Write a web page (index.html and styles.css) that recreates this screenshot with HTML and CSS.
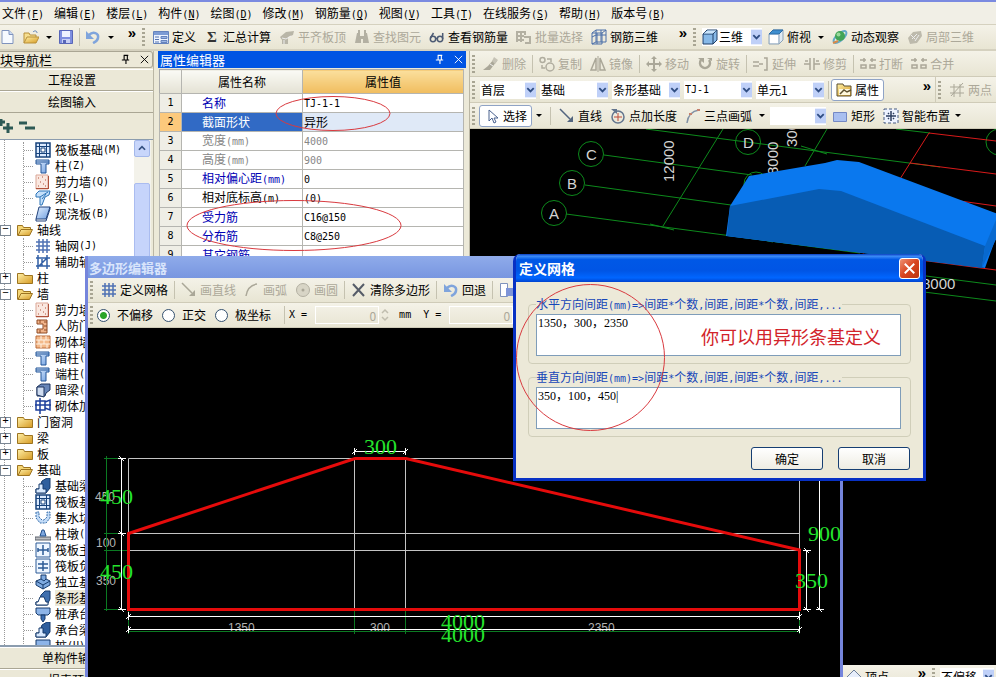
FILE: index.html
```html
<!DOCTYPE html>
<html lang="zh-CN">
<head>
<meta charset="utf-8">
<title>钢筋算量</title>
<link rel="stylesheet" href="styles.css">
</head>
<body>
<svg class="defs" aria-hidden="true">
  <defs>
    <linearGradient id="gold" x1="0" y1="0" x2="1" y2="1"><stop offset="0" stop-color="#fff0a8"/><stop offset="1" stop-color="#d69a22"/></linearGradient>
    <linearGradient id="steel" x1="0" y1="0" x2="1" y2="1"><stop offset="0" stop-color="#e4f0ff"/><stop offset="1" stop-color="#6f9fe0"/></linearGradient>
  </defs>
  <symbol id="new" viewBox="0 0 16 16"><path d="M2 1.500h7l4 4v9H2z" fill="#f6faff" stroke="#7f93bd"/><path d="M9 1.500v4h4" fill="#c9d8f2" stroke="#7f93bd"/></symbol>
  <symbol id="open" viewBox="0 0 16 16"><path d="M1 14V4h5l1 2h6v3" fill="#f6df90" stroke="#b8903a"/><path d="M1 14l3-6h12l-3 6z" fill="url(#gold)" stroke="#b8903a"/><path d="M10 3c2-2 4-1 4 1" fill="none" stroke="#5c7fb5"/></symbol>
  <symbol id="save" viewBox="0 0 16 16"><path d="M1.500 1.500h13v13h-13z" fill="#7f8fe0" stroke="#5866b8"/><path d="M4 2h8v6H4z" fill="#eef2ff"/><path d="M4 10h8v4H4z" fill="#c7cff5"/><path d="M5 11h3v3H5z" fill="#5866b8"/></symbol>
  <symbol id="undo" viewBox="0 0 16 16"><path d="M4 6c4-4 10-2 9 3-.5 3-3 4-5 5" fill="none" stroke="#7fa4dc" stroke-width="2.500"/><path d="M1 2v8h8z" fill="#7fa4dc"/></symbol>
  <symbol id="define" viewBox="0 0 16 16"><path d="M.5 2.500h15v12H.5z" fill="#eef4ff" stroke="#6583bd"/><path d="M1 3h14v3H1z" fill="#7d9cd4"/><path d="M2 8h4M2 10.500h4M2 13h4" stroke="#5574b0"/><path d="M8 7.500h6v2H8zM8 11.500h6v2H8z" fill="#9db6e4" stroke="#6583bd"/></symbol>
  <symbol id="flat" viewBox="0 0 16 16"><path d="M1 8l6-5 8-1-1 4-5 2v7H3v-4z" fill="#b9b6a8"/><path d="M3 9l4 1 5-3M5 15v-4" stroke="#eee" fill="none"/></symbol>
  <symbol id="find" viewBox="0 0 16 16"><path d="M3 4h3v3h4V4h3l2 10H9v-4H7v4H1z" fill="#b3b0a2"/><path d="M4 1h2v3H4zM10 1h2v3h-2z" fill="#b3b0a2"/></symbol>
  <symbol id="glasses" viewBox="0 0 16 16"><g fill="none" stroke="#4c5b74" stroke-width="1.500"><circle cx="4" cy="10" r="2.700"/><circle cx="11" cy="10" r="2.700"/><path d="M1.500 9l3-5M13.700 10V4M7 9.500h2"/></g></symbol>
  <symbol id="batch" viewBox="0 0 16 16"><path d="M1 2v11M5 2v11M1 3h8M1 7h7M1 11h7M9 2v4M8 8h6v6H9" fill="none" stroke="#b3b0a2" stroke-width="2"/></symbol>
  <symbol id="rebar3d" viewBox="0 0 16 16"><path d="M1 4l4-3v12l-4 2zM5 1h10v12H5M10 1v12M1 8l4-2h10M1 4h10l4-3M11 4v11H1M6 4v11" fill="none" stroke="#4a6ea8"/></symbol>
  <symbol id="cube" viewBox="0 0 16 16"><path d="M1 5l4-4h10v10l-4 4H1z" fill="#87b9e8" stroke="#1f3f66"/><path d="M1 5h10v10M11 5l4-4" fill="none" stroke="#1f3f66"/><path d="M1.500 4.500l4-3h9l-4 3z" fill="#c9e3fa"/></symbol>
  <symbol id="topcube" viewBox="0 0 16 16"><path d="M1 5l4-4h10v10l-4 4H1z" fill="#dfe9f3" stroke="#8ba2b8"/><path d="M1 5l4-4h10l-4 4z" fill="#3f8fd0" stroke="#2f6da5"/><path d="M11 5v10" stroke="#8ba2b8"/><path d="M2 6h8v8H2z" fill="#fff"/></symbol>
  <symbol id="orbit" viewBox="0 0 16 16"><ellipse cx="8" cy="8" rx="8" ry="3.500" fill="none" stroke="#63a9c8" stroke-width="2" transform="rotate(-42 8 8)"/><circle cx="8" cy="7" r="5" fill="#43a457"/><circle cx="6.500" cy="5.500" r="2" fill="#98d89a"/><path d="M1 14l5-2" stroke="#d68a4a" stroke-width="2"/></symbol>
  <symbol id="local3d" viewBox="0 0 16 16"><path d="M1 9l5-6 8-1 1 5-5 7-7 1z" fill="#bdbaac"/><path d="M5 10l5-5M8 12l4-6M4 6l4 4" stroke="#eee"/></symbol>
  <symbol id="brush" viewBox="0 0 16 16"><path d="M0 14h7l7-9-3-2-6 7" fill="#aaa798"/><path d="M11 1l4 3-3 4-3-3z" fill="#c6c3b6"/><path d="M7 8l3 2" stroke="#eee"/></symbol>
  <symbol id="copy" viewBox="0 0 16 16"><g fill="none" stroke="#b0ad9f" stroke-width="1.500"><circle cx="3.500" cy="4" r="2.500"/><circle cx="11" cy="11" r="4"/><path d="M8 3h4v3M3 9v3h3"/></g></symbol>
  <symbol id="mirror" viewBox="0 0 16 16"><path d="M6 2v12H1zM10 2v12h5z" fill="none" stroke="#aaa798" stroke-width="1.500"/><path d="M8 0v16" stroke="#aaa798"/></symbol>
  <symbol id="move" viewBox="0 0 16 16"><path d="M8 2v12M2 8h12" stroke="#aaa798" stroke-width="2"/><path d="M8 0l3 3H5zM8 16l3-3H5zM0 8l3-3v6zM16 8l-3-3v6z" fill="#aaa798"/></symbol>
  <symbol id="rotate" viewBox="0 0 16 16"><path d="M4 4a5 5 0 1 0 8 0" fill="none" stroke="#aaa798" stroke-width="2.500"/><path d="M1 2h6v5zM10 2h5v3z" fill="#aaa798"/></symbol>
  <symbol id="extend" viewBox="0 0 16 16"><path d="M0 6h6M0 10h6M6 8h4M11 2h3v12h-3" fill="none" stroke="#aaa798" stroke-width="1.500"/></symbol>
  <symbol id="trim" viewBox="0 0 16 16"><path d="M0 8h6M10 8h6M6 2v12M10 2v12M1 5h3M12 5h3" fill="none" stroke="#aaa798" stroke-width="1.500"/></symbol>
  <symbol id="break" viewBox="0 0 16 16"><path d="M0 4h6M10 4h6M1 12h5v-3H1zM10 12h5v-3h-5zM4 2v4M12 2v4" fill="none" stroke="#aaa798" stroke-width="1.500"/></symbol>
  <symbol id="prop" viewBox="0 0 16 16"><path d="M1 2h6l1 2h7v10H1z" fill="url(#gold)" stroke="#5d5030"/><path d="M3 7h11v6H3z" fill="#fff8dc"/><path d="M4 12l4-4 3 2 4-2" fill="none" stroke="#5d5030" stroke-width="1.500"/></symbol>
  <symbol id="twopt" viewBox="0 0 16 16"><path d="M1 5h14M1 11h14M5 2v13M11 2v13M2 14L14 1" stroke="#aaa798"/></symbol>
  <symbol id="pointer" viewBox="0 0 16 16"><path d="M5 2v11l3-3 2 5 2-1-2-4h4z" fill="#fff" stroke="#4b628f"/></symbol>
  <symbol id="line" viewBox="0 0 16 16"><path d="M1 1l10 10" stroke="#53657f" stroke-width="1.500"/><path d="M14 8v6H8z" fill="#53657f"/></symbol>
  <symbol id="lineoff" viewBox="0 0 16 16"><path d="M1 1l10 10" stroke="#aaa798" stroke-width="1.500"/><path d="M14 8v6H8z" fill="#aaa798"/></symbol>
  <symbol id="ptlen" viewBox="0 0 16 16"><circle cx="8" cy="9" r="6" fill="none" stroke="#63758e" stroke-width="1.500"/><path d="M8 5v8M4 9h8" stroke="#c04a38"/><path d="M1 1h6v5z" fill="#63758e"/></symbol>
  <symbol id="arc" viewBox="0 0 16 16"><path d="M2 15C3 7 7 3 14 2" fill="none" stroke="#8090a4" stroke-width="1.500"/><path d="M12 1h3v2h-3zM4 5h3v2H4z" fill="#c5806e"/></symbol>
  <symbol id="arcoff" viewBox="0 0 16 16"><path d="M2 14C3 7 7 3 13 2" fill="none" stroke="#aaa798" stroke-width="1.500"/></symbol>
  <symbol id="circoff" viewBox="0 0 16 16"><circle cx="8" cy="8" r="6.500" fill="#d8d5c6" stroke="#b3b0a2"/><circle cx="8" cy="8" r="1.500" fill="#aaa798"/></symbol>
  <symbol id="rect" viewBox="0 0 16 16"><path d="M1.500 4.500h13v9h-13z" fill="#a9bff0" stroke="#7488c4"/></symbol>
  <symbol id="smart" viewBox="0 0 16 16"><path d="M1 1h14v14H1z" fill="#eef3ff" stroke="#465a80" stroke-dasharray="3 2"/><path d="M8 3v10M3 8h10M5 5l1 1M11 5l-1 1M5 11l1-1M11 11l-1-1" stroke="#2d3e60" stroke-width="1.500"/></symbol>
  <symbol id="cross" viewBox="0 0 16 16"><path d="M2 2l11 12M13 2L2 14" stroke="#555c68" stroke-width="2"/></symbol>
  <symbol id="vertex" viewBox="0 0 16 16"><path d="M8 1l7 7-7 7-7-7z" fill="#e7eefb" stroke="#6d7f99"/></symbol>
  <symbol id="pages" viewBox="0 0 16 16"><path d="M1.500 1.500h7v13h-7z" fill="#fff" stroke="#7f93bd"/><path d="M7 6h8v8H7z" fill="#7d94d8"/></symbol>
  <symbol id="raft" viewBox="0 0 16 16"><path d="M1 1h14v14H1z" fill="#dcebff" stroke="#17437c" stroke-width="1.500"/><path d="M4.500 1v14M11.500 1v14M1 4.500h14M1 11.500h14" stroke="#17437c"/><path d="M6 6h4v4H6z" fill="#fff" stroke="#17437c"/></symbol>
  <symbol id="column" viewBox="0 0 16 16"><path d="M1 2h13v4h-3v9H6V6H1z" fill="url(#steel)" stroke="#225497"/><path d="M1 4h13" stroke="#225497"/></symbol>
  <symbol id="wall" viewBox="0 0 16 16"><path d="M1 1h12v14H1z" fill="#fae8e0" stroke="#dba797"/><path d="M13.500 2v13M1 14.500h13M3 4h1M7 3h1M10 6h1M5 8h1M8 10h1M3 12h1M10 12h1" stroke="#b0523b"/></symbol>
  <symbol id="beam" viewBox="0 0 16 16"><path d="M1 4l3-3h11l-1 4-4 2-3 8H5V7H1z" fill="#c5e0fa" stroke="#2d74b8"/><path d="M5 7l8-5M7 9l4-5" stroke="#2d74b8"/></symbol>
  <symbol id="slab" viewBox="0 0 16 16"><path d="M4 1h11l-4 12H1z" fill="url(#steel)" stroke="#23437c"/><path d="M1 13v2h10l4-12V1" fill="none" stroke="#23437c"/></symbol>
  <symbol id="grid" viewBox="0 0 16 16"><path d="M4 1v14M8 1v14M12 1v14M1 4h14M1 8h14M1 12h14" stroke="#4f72b4" stroke-width="1.500"/></symbol>
  <symbol id="aux" viewBox="0 0 16 16"><path d="M3 1v14M12 1v14M1 4h14M1 12h14M4 12l8-8M7 5v7" stroke="#315fa5" fill="none" stroke-width="1.500"/></symbol>
  <symbol id="door" viewBox="0 0 16 16"><path d="M2 2h10v13H2v-4h6V6H2z" fill="#f1b48a" stroke="#8e4a24"/><path d="M5 2v3M9 4h3M9 8h3M9 12h3M5 12v3" stroke="#8e4a24"/></symbol>
  <symbol id="brick" viewBox="0 0 16 16"><path d="M1 2h14v12H1z" fill="#f3b98a" stroke="#bb6a38"/><path d="M1 6h14M1 10h14M6 2v4M11 2v4M4 6v4M9 6v4M6 10v4M12 10v4" stroke="#fff1e2"/></symbol>
  <symbol id="hbeam" viewBox="0 0 16 16"><path d="M2 5l4-3h9v6l-4 3-1 3H2z" fill="#6886b8" stroke="#1e355f"/><path d="M2 5h7v10l-7-2z" fill="#cfdcf0" stroke="#1e355f"/></symbol>
  <symbol id="reinf" viewBox="0 0 16 16"><path d="M1 3h9v9H1zM5 0v16M0 7h16M10 4l5-2v10l-5-2" fill="none" stroke="#1d3f9c" stroke-width="1.500"/></symbol>
  <symbol id="fold" viewBox="0 0 16 16"><path d="M.5 13.500v-10h6l1 2h8v8z" fill="url(#gold)" stroke="#9d7420"/></symbol>
  <symbol id="foldo" viewBox="0 0 16 16"><path d="M.5 13.500v-10h5l1 2h7v3" fill="#f5d676" stroke="#9d7420"/><path d="M1 13.500l3-6h11.500l-3 6z" fill="url(#gold)" stroke="#9d7420"/></symbol>
  <symbol id="fbeam" viewBox="0 0 16 16"><path d="M1 15v-4h3l3-8 5-3h3v10l-4 5z" fill="#2f5f9e" stroke="#163b6c"/><path d="M1 15v-4h3V6h4v5h3v4z" fill="#d9eaff" stroke="#163b6c"/></symbol>
  <symbol id="sump" viewBox="0 0 16 16"><path d="M1 2v6l4 5h6l4-5V2h-3v5l-3 3H7L4 7V2z" fill="#c3dcf8" stroke="#326aa8" stroke-dasharray="2 1"/></symbol>
  <symbol id="pier" viewBox="0 0 16 16"><path d="M0 11h16v3H0z" fill="#bdbfc2" stroke="#5a616b"/><path d="M5 10l2-6h2l2 6z" fill="#7da7df" stroke="#23508c"/></symbol>
  <symbol id="rmain" viewBox="0 0 16 16"><path d="M1 1h14v14H1z" fill="#eef6ff" stroke="#2d5b96"/><path d="M3 8h10M8 3v10M3 6v4M13 6v4" stroke="#2d5b96" stroke-width="1.500"/></symbol>
  <symbol id="rneg" viewBox="0 0 16 16"><path d="M1 1h14v14H1z" fill="#eef6ff" stroke="#2d5b96"/><path d="M3 6h10M3 10h10M8 3v10" stroke="#2d5b96" stroke-width="1.500"/></symbol>
  <symbol id="isol" viewBox="0 0 16 16"><path d="M1 7l5-2V1h5v4l4 2v4l-7 4-7-4z" fill="#7eaae0" stroke="#163b6c"/><path d="M1 7l7 4 7-4M8 11v4M6 5l3 2 2-2" fill="none" stroke="#163b6c"/></symbol>
  <symbol id="strip" viewBox="0 0 16 16"><path d="M1 15v-3h3l2-7 4-4h5v8l-3 6z" fill="#3f6fae" stroke="#163b6c"/><path d="M1 15v-3h2l2-5h4l2 5h2v3z" fill="#fff" stroke="#163b6c"/></symbol>
  <symbol id="cap" viewBox="0 0 16 16"><path d="M1 2h14v5l-2 2H3L1 7z" fill="#8db4e8" stroke="#163b6c"/><path d="M6 9h4v4l-2 3-2-3z" fill="#3d6fb4" stroke="#163b6c"/></symbol>
  <symbol id="pin" viewBox="0 0 12 12"><path d="M4 1.500h5M4.500 1v5M8 1v5M2 6.500h8M6.500 7v4" stroke="currentColor" fill="none" stroke-width="1.200"/></symbol>
  <symbol id="x" viewBox="0 0 12 12"><path d="M2 2l8 8M10 2l-8 8" stroke="currentColor" fill="none"/></symbol>
  <symbol id="chev" viewBox="0 0 12 16"><path d="M0 0h12v16H0z" fill="#bfd0f8"/><path d="M2.500 6L6 9.500 9.500 6" fill="none" stroke="#2f4d82" stroke-width="2"/></symbol>
</svg>

<div class="app">
  <nav class="menubar">
    <button>文件<span class="m">(<u>F</u>)</span></button><button>编辑<span class="m">(<u>E</u>)</span></button><button>楼层<span class="m">(<u>L</u>)</span></button><button>构件<span class="m">(<u>N</u>)</span></button><button>绘图<span class="m">(<u>D</u>)</span></button><button>修改<span class="m">(<u>M</u>)</span></button><button>钢筋量<span class="m">(<u>Q</u>)</span></button><button>视图<span class="m">(<u>V</u>)</span></button><button>工具<span class="m">(<u>T</u>)</span></button><button>在线服务<span class="m">(<u>S</u>)</span></button><button>帮助<span class="m">(<u>H</u>)</span></button><button>版本号<span class="m">(<u>B</u>)</span></button>
  </nav>

  <div class="toolbar main">
    <div class="group files">
      <button class="tool" aria-label="新建"><svg class="ic"><use href="#new"/></svg></button>
      <button class="tool" aria-label="打开"><svg class="ic"><use href="#open"/></svg><i class="caret"></i></button>
      <button class="tool" aria-label="保存"><svg class="ic"><use href="#save"/></svg></button>
      <i class="sep"></i>
      <button class="tool" aria-label="撤销"><svg class="ic"><use href="#undo"/></svg><i class="caret"></i></button>
      <b class="more">»</b>
    </div>
    <div class="group actions">
      <i class="grip"></i>
      <button class="tool"><svg class="ic"><use href="#define"/></svg>定义</button>
      <button class="tool"><span class="ic sigma">Σ</span>汇总计算</button>
      <button class="tool" disabled><svg class="ic"><use href="#flat"/></svg>平齐板顶</button>
      <button class="tool" disabled><svg class="ic"><use href="#find"/></svg>查找图元</button>
      <button class="tool"><svg class="ic"><use href="#glasses"/></svg>查看钢筋量</button>
      <button class="tool" disabled><svg class="ic"><use href="#batch"/></svg>批量选择</button>
      <button class="tool"><svg class="ic"><use href="#rebar3d"/></svg>钢筋三维</button>
      <b class="more end">»</b>
    </div>
    <div class="group">
      <i class="grip"></i>
      <label class="combo view"><svg class="ic"><use href="#cube"/></svg><select aria-label="视图"><option>三维</option></select><svg class="chev"><use href="#chev"/></svg></label>
      <button class="tool"><svg class="ic"><use href="#topcube"/></svg>俯视<i class="caret"></i></button>
      <button class="tool"><svg class="ic"><use href="#orbit"/></svg>动态观察</button>
      <button class="tool" disabled><svg class="ic"><use href="#local3d"/></svg>局部三维</button>
    </div>
  </div>

  <div class="work">
    <aside class="nav">
      <header class="navhead"><span>块导航栏</span><svg class="s12"><use href="#pin"/></svg><svg class="s12"><use href="#x"/></svg></header>
      <button class="navbtn">工程设置</button>
      <button class="navbtn">绘图输入</button>
      <div class="treetools"><svg width="40" height="18" viewBox="0 0 40 18"><path d="M1 1v7M0 4h5M8 5v10M3 10h10" stroke="#2d5a55" stroke-width="3"/><path d="M19 5h8M25 10h10" stroke="#2d5a55" stroke-width="3"/></svg></div>
      <div class="treebox">
        <ul class="tree">
          <li class="leaf"><svg class="ic"><use href="#raft"/></svg>筏板基础<span class="m">(M)</span></li>
          <li class="leaf"><svg class="ic"><use href="#column"/></svg>柱<span class="m">(Z)</span></li>
          <li class="leaf"><svg class="ic"><use href="#wall"/></svg>剪力墙<span class="m">(Q)</span></li>
          <li class="leaf"><svg class="ic"><use href="#beam"/></svg>梁<span class="m">(L)</span></li>
          <li class="leaf"><svg class="ic"><use href="#slab"/></svg>现浇板<span class="m">(B)</span></li>
          <li class="node minus"><svg class="ic"><use href="#foldo"/></svg>轴线</li>
          <li class="leaf"><svg class="ic"><use href="#grid"/></svg>轴网<span class="m">(J)</span></li>
          <li class="leaf"><svg class="ic"><use href="#aux"/></svg>辅助轴</li>
          <li class="node plus"><svg class="ic"><use href="#fold"/></svg>柱</li>
          <li class="node minus"><svg class="ic"><use href="#foldo"/></svg>墙</li>
          <li class="leaf"><svg class="ic"><use href="#wall"/></svg>剪力墙</li>
          <li class="leaf"><svg class="ic"><use href="#door"/></svg>人防门</li>
          <li class="leaf"><svg class="ic"><use href="#brick"/></svg>砌体墙</li>
          <li class="leaf"><svg class="ic"><use href="#column"/></svg>暗柱<span class="m">(Z)</span></li>
          <li class="leaf"><svg class="ic"><use href="#column"/></svg>端柱<span class="m">(Z)</span></li>
          <li class="leaf"><svg class="ic"><use href="#hbeam"/></svg>暗梁<span class="m">(A)</span></li>
          <li class="leaf"><svg class="ic"><use href="#reinf"/></svg>砌体加</li>
          <li class="node plus"><svg class="ic"><use href="#fold"/></svg>门窗洞</li>
          <li class="node plus"><svg class="ic"><use href="#fold"/></svg>梁</li>
          <li class="node plus"><svg class="ic"><use href="#fold"/></svg>板</li>
          <li class="node minus"><svg class="ic"><use href="#foldo"/></svg>基础</li>
          <li class="leaf"><svg class="ic"><use href="#fbeam"/></svg>基础梁</li>
          <li class="leaf"><svg class="ic"><use href="#raft"/></svg>筏板基</li>
          <li class="leaf"><svg class="ic"><use href="#sump"/></svg>集水坑</li>
          <li class="leaf"><svg class="ic"><use href="#pier"/></svg>柱墩<span class="m">(Y)</span></li>
          <li class="leaf"><svg class="ic"><use href="#rmain"/></svg>筏板主</li>
          <li class="leaf"><svg class="ic"><use href="#rneg"/></svg>筏板负</li>
          <li class="leaf"><svg class="ic"><use href="#isol"/></svg>独立基</li>
          <li class="leaf"><svg class="ic"><use href="#strip"/></svg><span class="picked">条形基</span></li>
          <li class="leaf"><svg class="ic"><use href="#cap"/></svg>桩承台</li>
          <li class="leaf"><svg class="ic"><use href="#fbeam"/></svg>承台梁</li>
          <li class="leaf"><svg class="ic"><use href="#cap"/></svg>桩<span class="m">(U)</span></li>
        </ul>
        <div class="scroll"><button class="up" aria-label="向上"><svg viewBox="0 0 16 16"><path d="M4.500 10L8 6.500l3.500 3.500" fill="none" stroke="#34507f" stroke-width="2"/></svg></button><div class="thumb"></div></div>
      </div>
      <button class="navbtn">单构件输入</button>
      <button class="navbtn">报表预览</button>
    </aside>

    <section class="props">
      <header class="prophead"><span>属性编辑器</span><svg class="s12"><use href="#pin"/></svg><svg class="s12"><use href="#x"/></svg></header>
      <table>
        <thead><tr><th class="no"></th><th class="name">属性名称</th><th class="val">属性值</th></tr></thead>
        <tbody>
          <tr><th>1</th><td class="blue">名称</td><td><span class="m">TJ-1-1</span></td></tr>
          <tr class="sel"><th>2</th><td>截面形状</td><td>异形</td></tr>
          <tr class="dim"><th>3</th><td>宽度<span class="m">(mm)</span></td><td><span class="m">4000</span></td></tr>
          <tr class="dim"><th>4</th><td>高度<span class="m">(mm)</span></td><td><span class="m">900</span></td></tr>
          <tr><th>5</th><td class="blue">相对偏心距<span class="m">(mm)</span></td><td><span class="m">0</span></td></tr>
          <tr><th>6</th><td>相对底标高<span class="m">(m)</span></td><td><span class="m">(0)</span></td></tr>
          <tr><th>7</th><td class="blue">受力筋</td><td><span class="m">C16@150</span></td></tr>
          <tr><th>8</th><td class="blue">分布筋</td><td><span class="m">C8@250</span></td></tr>
          <tr><th>9</th><td class="blue">其它钢筋</td><td></td></tr>
        </tbody>
      </table>
    </section>

    <main class="right">
      <div class="toolbar">
        <i class="grip"></i>
        <button class="tool" disabled><svg class="ic"><use href="#brush"/></svg>删除</button>
        <i class="sep"></i>
        <button class="tool" disabled><svg class="ic"><use href="#copy"/></svg>复制</button>
        <button class="tool" disabled><svg class="ic"><use href="#mirror"/></svg>镜像</button>
        <i class="sep"></i>
        <button class="tool" disabled><svg class="ic"><use href="#move"/></svg>移动</button>
        <button class="tool" disabled><svg class="ic"><use href="#rotate"/></svg>旋转</button>
        <i class="sep"></i>
        <button class="tool" disabled><svg class="ic"><use href="#extend"/></svg>延伸</button>
        <button class="tool" disabled><svg class="ic"><use href="#trim"/></svg>修剪</button>
        <i class="sep"></i>
        <button class="tool" disabled><svg class="ic"><use href="#break"/></svg>打断</button>
        <button class="tool" disabled><svg class="ic"><use href="#break"/></svg>合并</button>
      </div>
      <div class="toolbar">
        <div class="group grow">
          <i class="grip"></i>
          <label class="combo short"><select aria-label="楼层"><option>首层</option></select><svg class="chev"><use href="#chev"/></svg></label>
          <label class="combo"><select aria-label="构件分类"><option>基础</option></select><svg class="chev"><use href="#chev"/></svg></label>
          <label class="combo"><select aria-label="构件类型"><option>条形基础</option></select><svg class="chev"><use href="#chev"/></svg></label>
          <label class="combo"><select class="mono" aria-label="构件"><option>TJ-1</option></select><svg class="chev"><use href="#chev"/></svg></label>
          <label class="combo"><select aria-label="单元"><option>单元1</option></select><svg class="chev"><use href="#chev"/></svg></label>
          <i class="sep"></i>
          <button class="tool boxed"><svg class="ic"><use href="#prop"/></svg>属性</button>
          <b class="more end">»</b>
        </div>
        <div class="group points"><i class="grip"></i><button class="tool" disabled><svg class="ic"><use href="#twopt"/></svg>两点</button></div>
      </div>
      <div class="toolbar draw">
        <i class="grip"></i>
        <button class="tool boxed"><svg class="ic"><use href="#pointer"/></svg>选择</button><i class="caret"></i>
        <i class="sep wide"></i>
        <button class="tool"><svg class="ic"><use href="#line"/></svg>直线</button>
        <button class="tool"><svg class="ic"><use href="#ptlen"/></svg>点加长度</button>
        <button class="tool"><svg class="ic"><use href="#arc"/></svg>三点画弧<i class="caret"></i></button>
        <label class="combo short"><select aria-label="画法"><option></option></select><svg class="chev"><use href="#chev"/></svg></label>
        <button class="tool"><svg class="ic"><use href="#rect"/></svg>矩形</button>
        <button class="tool"><svg class="ic"><use href="#smart"/></svg>智能布置<i class="caret near"></i></button>
      </div>
      <svg class="scene"><g transform="translate(-470 -129)">
        <g stroke="#0d8a1c" fill="none">
          <circle cx="591" cy="154" r="12.500"/><circle cx="572" cy="183" r="12.500"/><circle cx="554" cy="213" r="12.500"/><circle cx="748" cy="142" r="12.500"/><circle cx="999" cy="142" r="13"/><circle cx="756" cy="184" r="12"/>
          <path d="M604 155l148 20M585 185l146 20M566 214l294 39M646 129l294 38M723 129l-60 97M827 129l-22 37M650 224l24 6M801 146l26 8M896 129l34 4M745 236l28 6M926 276l70 9M924 292l72 9"/>
        </g>
        <path d="M929 133l67 8M929 133l-29 46M910 163l86 11M960 201l36 5M850 250l14 3M920 260l76 10" stroke="#d81a1a" fill="none"/>
        <g fill="#d4d4d4" class="axis"><text x="586" y="160">C</text><text x="567" y="189">B</text><text x="549" y="219">A</text><text x="743" y="148">D</text>
        <text x="922" y="289">8000</text><text transform="translate(674 182) rotate(-90)">12000</text><text transform="translate(778 175) rotate(-90)">8000</text><text transform="translate(797 147) rotate(-90)">3000</text></g>
        <path d="M730 206l19-30 76-13 12-3 22 2 139 52v18l-13 36-259-32z" fill="#0a78ee"/>
        <path d="M730 206l89-17 22 2 144 55-3 22-255-32z" fill="#075cb4"/>
        <path d="M985 246l13-31v20l-16 33z" fill="#0869cf"/>
      </g></svg>
      <div class="toolbar status">
        <div class="group vertex"><button class="tool"><svg class="ic"><use href="#vertex"/></svg>顶点</button><b class="more end">»</b></div>
        <div class="group"><i class="grip"></i><label class="combo short"><select aria-label="偏移方式"><option>不偏移</option></select><svg class="chev"><use href="#chev"/></svg></label></div>
      </div>
    </main>
  </div>

  <section class="win poly">
    <header class="polyhead">多边形编辑器</header>
    <div class="toolbar">
      <i class="grip"></i>
      <button class="tool"><svg class="ic"><use href="#grid"/></svg>定义网格</button>
      <i class="sep"></i>
      <button class="tool" disabled><svg class="ic"><use href="#lineoff"/></svg>画直线</button>
      <button class="tool" disabled><svg class="ic"><use href="#arcoff"/></svg>画弧</button>
      <button class="tool" disabled><svg class="ic"><use href="#circoff"/></svg>画圆</button>
      <i class="sep"></i>
      <button class="tool"><svg class="ic"><use href="#cross"/></svg>清除多边形</button>
      <i class="sep"></i>
      <button class="tool"><svg class="ic"><use href="#undo"/></svg>回退</button>
      <i class="sep"></i>
      <button class="tool" aria-label="导入"><svg class="ic"><use href="#pages"/></svg></button>
    </div>
    <div class="toolbar offset">
      <i class="grip"></i>
      <label class="radio"><input type="radio" name="o" checked>不偏移</label>
      <label class="radio"><input type="radio" name="o">正交</label>
      <label class="radio"><input type="radio" name="o">极坐标</label>
      <i class="sep"></i>
      <label class="coord"><span class="m">X =</span><input type="text" value="0" disabled></label><svg class="spin" viewBox="0 0 12 16"><path d="M3 6l3-3 3 3M3 10l3 3 3-3" fill="none" stroke="#c0bdae" stroke-width="1.500"/></svg><span class="m unit">mm</span>
      <label class="coord"><span class="m">Y =</span><input type="text" value="0" disabled></label>
    </div>
    <svg class="section"><g transform="translate(-88 -328)">
      <g class="gray"><text x="95" y="501">450</text><text x="96" y="547">100</text><text x="96" y="585">350</text><text x="228" y="632">1350</text><text x="370" y="632">300</text><text x="588" y="632">2350</text></g>
      <path d="M128.500 609V458.500h671V609M354.500 458v151M405.500 458v151M128 533.500h671M128 550.500h671" fill="none" stroke="#c4c4c4"/>
      <path d="M106.500 456v155M104 458.500h18M104 533.500h18M104 550.500h24M104 609.500h18M128 631.500h672M128.500 610v24M354.500 610v24M405.500 610v24M799.500 610v24" fill="none" stroke="#0b7a22"/>
      <path d="M121.500 458v151M118 458.500h8M118 533.500h8M118 609.500h8M128 616.500h672M128 629.500h672M128.500 612v8M128.500 626v7M799.500 612v8M799.500 626v7M354 451.500h52M354.500 448v7M405.500 448v7M806.500 550v59M803 550.500h8M803 609.500h8M819.500 458v151M816 609.500h8" fill="none" stroke="#fff"/>
      <path d="M119 456l5 5M119 531l5 5M119 607l5 5M126 619l5-5M126 632l5-5M797 619l5-5M797 632l5-5M352 454l5-5M403 454l5-5M804 548l5 5M804 607l5 5M817 607l5 5" stroke="#fff"/>
      <path d="M128.500 533.500L355 458.500h51l393.500 91.500v59.500h-671z" fill="none" stroke="#e50b0b" stroke-width="3"/>
      <g class="green"><text x="364" y="454">300</text><text x="100" y="504">450</text><text x="100" y="579">450</text><text x="441" y="629">4000</text><text x="441" y="642">4000</text><text x="808" y="541">900</text><text x="795" y="588">350</text></g>
    </g></svg>
  </section>

  <section class="win dialog">
    <header class="dialoghead"><span>定义网格</span><button class="close" aria-label="关闭"><svg viewBox="0 0 20 20"><path d="M5 5l10 10M15 5L5 15" stroke="#fff" stroke-width="2"/></svg></button></header>
    <form class="dialogbody">
      <fieldset><legend><label for="hx">水平方向间距<span class="m">(mm)=&gt;</span>间距<span class="m">*</span>个数<span class="m">,</span>间距<span class="m">,</span>间距<span class="m">*</span>个数<span class="m">,</span>间距<span class="m">,...</span></label></legend><textarea id="hx">1350，300，2350</textarea></fieldset>
      <fieldset><legend><label for="vy">垂直方向间距<span class="m">(mm)=&gt;</span>间距<span class="m">*</span>个数<span class="m">,</span>间距<span class="m">,</span>间距<span class="m">*</span>个数<span class="m">,</span>间距<span class="m">,...</span></label></legend><textarea id="vy">350，100，450|</textarea></fieldset>
      <div class="buttons"><button type="button">确定</button><button type="button">取消</button></div>
    </form>
    <p class="note">你可以用异形条基定义</p>
  </section>

  <svg class="marks"><g fill="none" stroke="#d93a3f"><ellipse cx="333" cy="113.500" rx="57" ry="17"/><ellipse cx="294" cy="225.500" rx="107" ry="25"/><ellipse cx="590.500" cy="357.500" rx="74" ry="73"/></g></svg>
</div>
</body>
</html>
```
FILE: styles.css
```css
* { box-sizing: border-box; }
body { margin: 0; background: #ece9d8; color: #000; font: 12px/16px "Noto Sans CJK SC", sans-serif; overflow: hidden; }
button, select, input, textarea { font: inherit; color: inherit; margin: 0; }
button { border: 0; background: none; padding: 0; white-space: nowrap; }
.defs { position: absolute; width: 0; height: 0; }
.m, .mono { font-family: "DejaVu Sans Mono", monospace; font-size: 10px; }
.app { position: relative; display: flex; flex-direction: column; height: 100vh; overflow: hidden; border-top: 2px solid #7b8ae0; }

.menubar { display: flex; gap: 10px; flex: none; height: 23px; padding: 0 2px; background: #f1efe6; border-bottom: 1px solid #d5d1bf; }
.menubar button { line-height: 22px; }

.toolbar { display: flex; align-items: center; flex: none; height: 26px; background: linear-gradient(#f4f2e8, #e8e5d3); border-bottom: 1px solid #cfcbb8; }
.toolbar.main { border-bottom: 2px solid #d5d1bf; }
.group { display: flex; align-items: center; height: 100%; }
.files { width: 140px; }
.actions { width: 551px; }
.grow { width: 469px; }
.points { border-left: 1px solid #cfcbb8; }
.ic { width: 16px; height: 16px; flex: none; }
.tool { display: flex; align-items: center; gap: 3px; padding: 0 4px; height: 20px; flex: none; }
.tool:disabled { color: #aca899; }
.files .tool { padding: 0 3px; gap: 3px; }
.files .tool:first-child { padding: 0 4px 0 0; }
.sigma { font: bold 15px/16px "Liberation Serif", serif; text-align: center; color: #333; }
.sep { width: 1px; height: 18px; margin: 0 2px; background: #c5c2b0; flex: none; }
.sep.wide { margin: 0 4px 0 8px; }
.grip { width: 3px; height: 18px; margin: 0 4px 0 2px; background: repeating-linear-gradient(#a8a593 0 2px, transparent 2px 4px); flex: none; }
.caret { width: 0; height: 0; border: 3px solid transparent; border-top-color: #000; border-bottom: 0; margin-left: 4px; }
.caret.near { margin-left: 2px; }
.more { font: bold 15px/16px "Liberation Sans", sans-serif; margin: 0 4px 8px; }
.more.end { margin-left: auto; }
.files .more { margin-left: auto; }
.boxed { background: #fff; border: 1px solid #8fa3c6; border-radius: 3px; height: 22px; }

.combo { display: flex; align-items: center; width: 68px; height: 18px; margin: 0 2px; background: #fff; flex: none; }
.combo.short { width: 56px; margin-left: 1px; }
.combo.view { width: 60px; }
.combo select { flex: 1; min-width: 0; height: 18px; padding: 0 1px; border: 0; background: none; appearance: none; }
.chev { width: 11px; height: 16px; flex: none; }

.work { display: flex; flex: 1; min-height: 0; }
.nav { display: flex; flex-direction: column; width: 154px; flex: none; margin-bottom: -14px; border-right: 1px solid #bab6a4; }
.navhead, .prophead { display: flex; align-items: center; gap: 8px; flex: none; height: 17px; font-size: 13px; padding: 0 2px; }
.navhead { border: 1px solid #aaa694; border-left: 0; border-radius: 0 3px 3px 0; padding-left: 0; margin-bottom: 1px; }
.navhead span, .prophead span { flex: 1; line-height: 16px; }
.s12 { width: 11px; height: 11px; }
.navbtn { flex: none; height: 22px; padding-right: 9px; border-top: 1px solid #fff; border-bottom: 1px solid #aaa694; background: #ebe8d7; }
.treetools { flex: none; height: 27px; padding-top: 5px; border-bottom: 1px solid #8b9cae; }
.treebox { display: flex; flex: 1; min-height: 0; background: #fff; border-bottom: 2px solid #8b9cae; border-right: 2px solid #ece9d8; }
.tree { flex: 1; min-width: 0; margin: 0; padding: 2px 0 0; list-style: none; overflow: hidden; background: repeating-linear-gradient(#999 0 1px, #fff 1px 2px) 4px 0 / 1px 100% no-repeat; }
.tree li { display: flex; align-items: center; height: 16px; white-space: nowrap; }
.leaf::before { content: ""; width: 10px; height: 16px; margin-left: 23px; margin-right: 1px; flex: none; border-left: 1px dotted #999; background: repeating-linear-gradient(90deg, #999 0 1px, #fff 1px 2px) 0 8px / 100% 1px no-repeat; }
.leaf .ic { margin-right: 4px; }
.node::before { width: 9px; height: 9px; margin-right: 6px; flex: none; border: 1px solid #7b8794; background: #fff; font: 11px/7px "Liberation Mono", monospace; text-align: center; }
.minus::before { content: "−"; }
.plus::before { content: "+"; }
.node .ic { margin-right: 4px; }
.picked { background: #ece9d8; }
.scroll { width: 17px; flex: none; background: #f3f2ea; }
.up { display: block; width: 16px; height: 17px; background: #c8d6fb; border: 1px solid #a4b8ea; border-radius: 2px; }
.thumb { width: 16px; height: 100px; margin-top: 26px; background: #c6d4fb; border: 1px solid #aabcf0; border-radius: 2px; }

.props { width: 316px; flex: none; padding: 0 3px 0 4px; background: #ece9d8; border-right: 1px solid #bab6a4; }
.prophead { background: #0054e3; color: #fff; }
.props table { width: 305px; margin: 1px 0 0 1px; border-collapse: collapse; table-layout: fixed; background: #fff; border: 1px solid #aaa; }
.props thead th { height: 24px; font-weight: normal; background: linear-gradient(#fafaf5, #e4e2d4); border-right: 1px solid #b5b5b0; padding: 0; }
.props thead .no { width: 22px; }
.props thead .name { width: 121px; }
.props thead .val { background: linear-gradient(#fbdf9d, #f0bd5e); }
.props tbody th { background: #efeee6; font: 10px/16px "DejaVu Sans Mono", monospace; padding: 0; }
.props tbody th, .props td { height: 19px; border: 1px solid #b5b5b0; line-height: 16px; }
.props td { padding: 0 0 0 1px; }
.props td:nth-child(2) { padding-left: 20px; }
.blue { color: #0000b4; }
.dim td { color: #868686; }
.sel td { background: #dfe9f7; }
.sel td:nth-child(2) { background: #316ac5; color: #fff; }
.props .sel th { background: #fcc97c; }

.right { display: flex; flex-direction: column; flex: 1; min-width: 0; margin-bottom: -12px; }
.scene { flex: 1; min-height: 0; width: 100%; background: #000; }
.axis { font: 15px "Liberation Sans", sans-serif; }
.status { height: 24px; justify-content: flex-end; }
.vertex { width: 88px; }
.status .combo { width: 54px; }

.win { position: absolute; display: flex; flex-direction: column; }
.poly { left: 85px; top: 254px; bottom: 0; width: 758px; border: 3px solid #7585dc; border-top: 0; border-bottom: 0; background: #000; }
.polyhead { flex: none; height: 22px; line-height: 24px; font-size: 13px; font-weight: bold; color: #d9e5fb; background: linear-gradient(#8fabea, #7896e0); padding-left: 1px; }
.poly .toolbar { height: 25px; overflow: hidden; }
.offset { gap: 4px; }
.offset .grip { margin-right: 0; }
.offset .sep { margin: 0 0 0 4px; }
.radio { display: flex; align-items: center; gap: 7px; padding-right: 5px; }
.radio input { appearance: none; width: 13px; height: 13px; border: 1px solid #33506f; border-radius: 50%; background: #fff; }
.radio input:checked { background: radial-gradient(#2aa52a 0 3px, #fff 4px); }
.coord { display: flex; align-items: center; gap: 8px; white-space: pre; }
.coord input { width: 64px; height: 18px; border: 1px solid #fff; background: none; text-align: right; color: #aca899; padding: 0 2px; }
.spin { width: 12px; height: 16px; margin-left: -4px; }
.unit { margin: 0 8px 0 4px; }
.section { flex: 1; min-height: 0; width: 100%; }
.gray { fill: #b4b4b4; font: 12px "Liberation Sans", sans-serif; }
.green { fill: #25e42d; font: 22px "Liberation Serif", serif; }

.dialog { left: 513px; top: 252px; width: 413px; border: 3px solid #0831c4; border-top: 0; border-radius: 7px 7px 0 0; background: #ece9d8; overflow: hidden; }
.dialoghead { display: flex; align-items: center; height: 28px; padding: 0 3px; color: #fff; font-size: 14px; font-weight: bold; background: linear-gradient(#0a3fc0, #3c8cf7 8%, #0058e6 20%, #0055e5 60%, #0066ff 85%, #0043cf); }
.dialoghead span { flex: 1; }
.close { width: 21px; height: 21px; border: 1px solid #fff; border-radius: 3px; background: linear-gradient(135deg, #ee9275, #d8431e 50%, #b93410); }
.close svg { display: block; width: 19px; height: 19px; }
.dialogbody { display: flex; flex-direction: column; gap: 4px; padding: 13px 12px 8px; }
fieldset { margin: 0; padding: 0 9px 7px 7px; border: 1px solid #d0ceb9; border-radius: 4px; min-width: 0; }
legend { padding: 0; color: #1646b8; line-height: 17px; }
textarea { display: block; width: 100%; height: 42px; padding: 0 1px; border: 1px solid #7f9db9; background: #fff; resize: none; font-family: "Liberation Serif", "Noto Sans CJK SC", serif; line-height: 17px; overflow: hidden; }
.buttons { display: flex; justify-content: flex-end; gap: 15px; padding: 6px 1px 0 0; }
.buttons button { width: 72px; height: 23px; border: 1px solid #163e72; border-radius: 3px; background: linear-gradient(#fff, #eeece2); }
.note { position: absolute; left: 185px; top: 70px; margin: 0; color: #d2232a; font-size: 18px; line-height: 24px; }
.marks { position: absolute; left: 0; top: -2px; width: 100%; height: 100%; pointer-events: none; }
```
